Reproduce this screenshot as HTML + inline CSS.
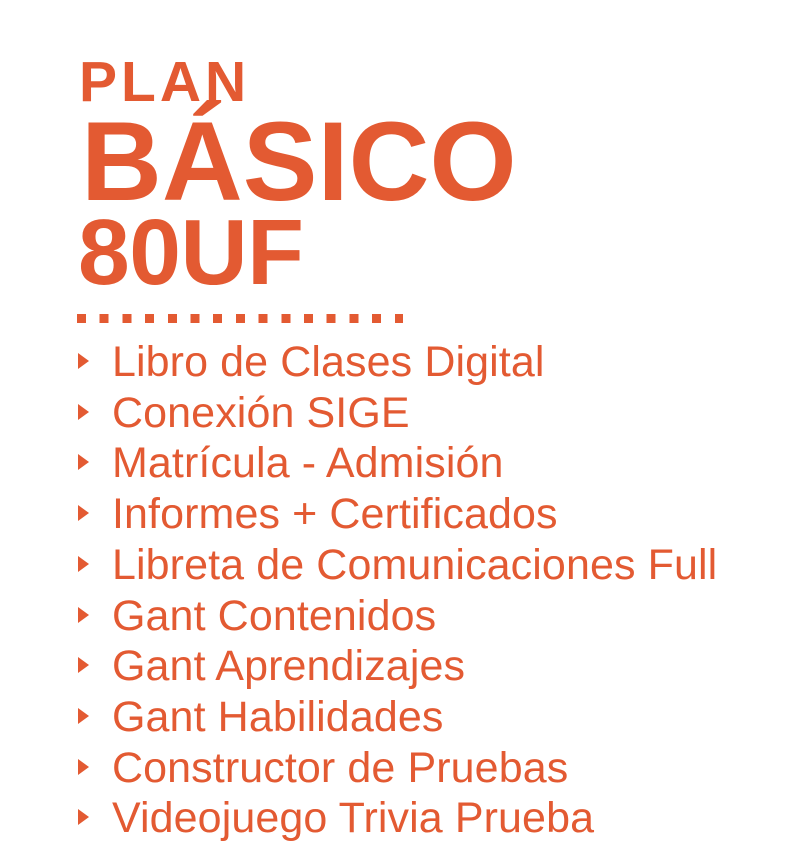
<!DOCTYPE html>
<html><head><style>
body{margin:0;width:800px;height:846px;background:#fff;position:relative;overflow:hidden;font-family:"Liberation Sans",Arial,sans-serif;color:#e35a32}
.a{position:absolute;white-space:nowrap;line-height:1}
.plan{left:79px;top:54px;font-size:57px;font-weight:bold;letter-spacing:4px}
.bas{left:81px;top:106px;font-size:112px;font-weight:bold;letter-spacing:0px}
.uf{left:78px;top:206px;font-size:93px;font-weight:bold;letter-spacing:-0.5px}
.dots{position:absolute;left:77px;top:314px;width:326px;height:9px;background:repeating-linear-gradient(90deg,#e35a32 0 9px,transparent 9px 22.7px)}
.li{position:absolute;left:112px;font-size:43px;line-height:1;white-space:nowrap;letter-spacing:0.1px}
.tri{position:absolute;left:78px;width:0;height:0;border-top:8px solid transparent;border-bottom:8px solid transparent;border-left:11px solid #e35a32}
</style></head><body>
<div class="a plan">PLAN</div>
<div class="a bas">BÁSICO</div>
<div class="a uf">80UF</div>
<div class="dots"></div>
<div class="tri" style="top:353px"></div><div class="li" style="top:341px">Libro de Clases Digital</div>
<div class="tri" style="top:404px"></div><div class="li" style="top:392px">Conexión SIGE</div>
<div class="tri" style="top:454px"></div><div class="li" style="top:442px">Matrícula - Admisión</div>
<div class="tri" style="top:505px"></div><div class="li" style="top:493px">Informes + Certificados</div>
<div class="tri" style="top:556px"></div><div class="li" style="top:544px">Libreta de Comunicaciones Full</div>
<div class="tri" style="top:607px"></div><div class="li" style="top:595px">Gant Contenidos</div>
<div class="tri" style="top:657px"></div><div class="li" style="top:645px">Gant Aprendizajes</div>
<div class="tri" style="top:708px"></div><div class="li" style="top:696px">Gant Habilidades</div>
<div class="tri" style="top:759px"></div><div class="li" style="top:747px">Constructor de Pruebas</div>
<div class="tri" style="top:809px"></div><div class="li" style="top:797px">Videojuego Trivia Prueba</div>
</body></html>
